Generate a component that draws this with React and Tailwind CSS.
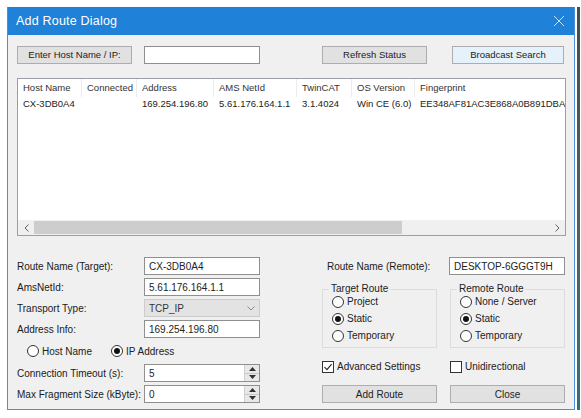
// Add Route Dialog — a Windows-style TwinCAT dialog rebuilt with flex rows.
const font = "font-['Liberation_Sans',Arial,sans-serif]";

const Btn = ({ children, className = "" }) => (
	<div
		className={`h-[18px] flex items-center justify-center bg-[#e1e1e1] border border-[#adadad] text-[9.5px] text-[#222] ${className}`}
	>
		{children}
	</div>
);

const Field = ({ children, className = "" }) => (
	<div
		className={`h-[18px] bg-white border border-[#8f8f8f] flex items-center px-[4px] text-[10px] text-[#222] ${className}`}
	>
		{children}
	</div>
);

const Radio = ({ checked }) => (
	<span className="w-[12px] h-[12px] shrink-0 rounded-full border border-[#333] bg-white flex items-center justify-center">
		{checked && <span className="w-[6px] h-[6px] rounded-full bg-[#111]" />}
	</span>
);

const Check = ({ checked }) => (
	<span className="w-[12px] h-[12px] shrink-0 border border-[#333] bg-white flex items-center justify-center">
		{checked && (
			<svg width="10" height="10" viewBox="0 0 10 10">
				<path d="M1.5 5.2 L4 7.6 L8.6 2.2" fill="none" stroke="#222" strokeWidth="1.1" />
			</svg>
		)}
	</span>
);

// Spin box used by the two numeric fields
const Spin = ({ value }) => (
	<div className="h-[18px] w-[116px] bg-white border border-[#8f8f8f] flex items-center text-[10px] text-[#222]">
		<span className="flex-1 pl-[4px]">{value}</span>
		<div className="w-[15px] h-full flex flex-col bg-[#e8e8e8] border-l border-[#d0d0d0]">
			<div className="flex-1 flex items-center justify-center border-b border-[#c8c8c8]">
				<svg width="7" height="4" viewBox="0 0 7 4">
					<path d="M0 4 L3.5 0 L7 4 Z" fill="#333" />
				</svg>
			</div>
			<div className="flex-1 flex items-center justify-center">
				<svg width="7" height="4" viewBox="0 0 7 4">
					<path d="M0 0 L3.5 4 L7 0 Z" fill="#333" />
				</svg>
			</div>
		</div>
	</div>
);

const columns = [
	{ name: "Host Name", w: "w-[64px]", value: "CX-3DB0A4" },
	{ name: "Connected", w: "w-[55px]", value: "" },
	{ name: "Address", w: "w-[77px]", value: "169.254.196.80" },
	{ name: "AMS NetId", w: "w-[83px]", value: "5.61.176.164.1.1" },
	{ name: "TwinCAT", w: "w-[55px]", value: "3.1.4024" },
	{ name: "OS Version", w: "w-[63px]", value: "Win CE (6.0)" },
	{ name: "Fingerprint", w: "w-[160px]", value: "EE348AF81AC3E868A0B891DBAE" },
];

const GroupBox = ({ title, items, checkedIndex }) => (
	<fieldset className="w-full border border-[#dcdcdc] px-[9px] pb-[3px]">
		<legend className="px-[2px] text-[10px] text-[#222] leading-[12px] -ml-[3px]">{title}</legend>
		<div className="-mt-[2px]">
			{items.map((item, i) => (
				<div key={item} className="h-[17px] flex items-center gap-[3px] text-[10px] text-[#222]">
					<Radio checked={i === checkedIndex} />
					<span>{item}</span>
				</div>
			))}
		</div>
	</fieldset>
);

const FormRow = ({ label, children }) => (
	<div className="flex items-center">
		<span className="w-[127px] text-[10px] text-[#1a1a1a]">{label}</span>
		{children}
	</div>
);

export default function App() {
	return (
		<div className={`w-[581px] h-[418px] bg-white overflow-hidden ${font}`}>
			<div className="flex pt-[7px] pl-[7px]">
				{/* Dialog window */}
				<div className="w-[568px] h-[403px] flex flex-col border-x border-b border-[#4a90d9]">
					{/* Title bar */}
					<div className="h-[28px] bg-[#1f82d8] flex items-center pl-[8px] pr-[9px]">
						<span className="text-white text-[12.5px] tracking-[0.2px]">Add Route Dialog</span>
						<svg className="ml-auto" width="12" height="12" viewBox="0 0 12 12">
							<path d="M1 1 L11 11 M11 1 L1 11" stroke="#dcebfa" strokeWidth="0.9" />
						</svg>
					</div>

					{/* Body */}
					<div className="flex-1 bg-[#f0f0f0] flex flex-col px-[9px] pt-[11px]">
						{/* Host search row */}
						<div className="flex items-center">
							<Btn className="w-[115px] h-[17px]">Enter Host Name / IP:</Btn>
							<Field className="w-[116px] h-[16px] ml-[12px]" />
							<Btn className="w-[105px] h-[17px] ml-[62px]">Refresh Status</Btn>
							<Btn className="w-[112px] h-[17px] ml-[25px] bg-[#e5f1fb] border-[#2a7fd0]">
								Broadcast Search
							</Btn>
						</div>

						{/* Host list */}
						<div className="mt-[14px] w-[549px] h-[158px] border border-[#9a9ea6] bg-white flex flex-col overflow-hidden">
							<div className="h-[18px] flex shrink-0">
								{columns.map((c) => (
									<div
										key={c.name}
										className={`${c.w} shrink-0 flex items-center pl-[5px] text-[9.5px] text-[#333] border-r border-[#ececec]`}
									>
										{c.name}
									</div>
								))}
							</div>
							<div className="h-[14px] flex shrink-0">
								{columns.map((c) => (
									<div
										key={c.name}
										className={`${c.w} shrink-0 flex items-center pl-[5px] text-[9.5px] text-[#222] whitespace-nowrap`}
									>
										{c.value}
									</div>
								))}
							</div>
							<div className="flex-1" />
							{/* Horizontal scroll bar */}
							<div className="h-[15px] flex bg-[#f0f0f0] shrink-0">
								<div className="w-[16px] flex items-center justify-center">
									<svg width="5" height="8" viewBox="0 0 5 8">
										<path d="M4.5 0.5 L1 4 L4.5 7.5" fill="none" stroke="#606060" strokeWidth="1" />
									</svg>
								</div>
								<div className="flex-1 flex py-[1px]">
									<div className="w-[368px] bg-[#cdcdcd]" />
								</div>
								<div className="w-[16px] flex items-center justify-center">
									<svg width="5" height="8" viewBox="0 0 5 8">
										<path d="M0.5 0.5 L4 4 L0.5 7.5" fill="none" stroke="#606060" strokeWidth="1" />
									</svg>
								</div>
							</div>
						</div>

						{/* Route settings */}
						<div className="mt-[21px] flex">
							<div className="w-[244px] flex flex-col gap-[3px]">
								<FormRow label="Route Name (Target):">
									<Field className="w-[116px]">CX-3DB0A4</Field>
								</FormRow>
								<FormRow label="AmsNetId:">
									<Field className="w-[116px]">5.61.176.164.1.1</Field>
								</FormRow>
								<FormRow label="Transport Type:">
									<div className="h-[18px] w-[116px] bg-[#e3e3e3] border border-[#cccccc] flex items-center px-[4px] text-[10px] text-[#333]">
										<span className="flex-1">TCP_IP</span>
										<svg width="8" height="5" viewBox="0 0 8 5">
											<path d="M0.5 0.5 L4 4 L7.5 0.5" fill="none" stroke="#8a8a8a" strokeWidth="1" />
										</svg>
									</div>
								</FormRow>
								<FormRow label="Address Info:">
									<Field className="w-[116px]">169.254.196.80</Field>
								</FormRow>
								<div className="h-[20px] flex items-center pl-[10px] text-[10px] text-[#222]">
									<Radio checked={false} />
									<span className="ml-[3px]">Host Name</span>
									<span className="ml-[19px]">
										<Radio checked />
									</span>
									<span className="ml-[3px]">IP Address</span>
								</div>
								<FormRow label="Connection Timeout (s):">
									<Spin value="5" />
								</FormRow>
								<FormRow label="Max Fragment Size (kByte):">
									<Spin value="0" />
								</FormRow>
							</div>

							<div className="ml-[62px] w-[243px] flex flex-col">
								<div className="flex items-center">
									<span className="w-[127px] pl-[5px] text-[10px] text-[#1a1a1a]">Route Name (Remote):</span>
									<Field className="w-[116px] h-[17px]">DESKTOP-6GGGT9H</Field>
								</div>
								<div className="mt-[8px] flex gap-[13px]">
									<div className="w-[115px]">
										<GroupBox title="Target Route" items={["Project", "Static", "Temporary"]} checkedIndex={1} />
									</div>
									<div className="w-[115px]">
										<GroupBox
											title="Remote Route"
											items={["None / Server", "Static", "Temporary"]}
											checkedIndex={1}
										/>
									</div>
								</div>
								<div className="mt-[11px] flex text-[10px] text-[#222]">
									<div className="w-[128px] flex items-center gap-[3px]">
										<Check checked />
										<span>Advanced Settings</span>
									</div>
									<div className="flex items-center gap-[3px]">
										<Check checked={false} />
										<span>Unidirectional</span>
									</div>
								</div>
								<div className="mt-[11px] flex gap-[13px]">
									<Btn className="w-[115px] text-[10px]">Add Route</Btn>
									<Btn className="w-[115px] text-[10px]">Close</Btn>
								</div>
							</div>
						</div>
					</div>
				</div>
				{/* Edge of whatever sits behind the dialog */}
				<div className="ml-[2px] w-[3px] h-[403px] bg-gradient-to-b from-[#4a4a4a] via-[#5a5a5a] to-[#2c6f80]" />
			</div>
		</div>
	);
}
